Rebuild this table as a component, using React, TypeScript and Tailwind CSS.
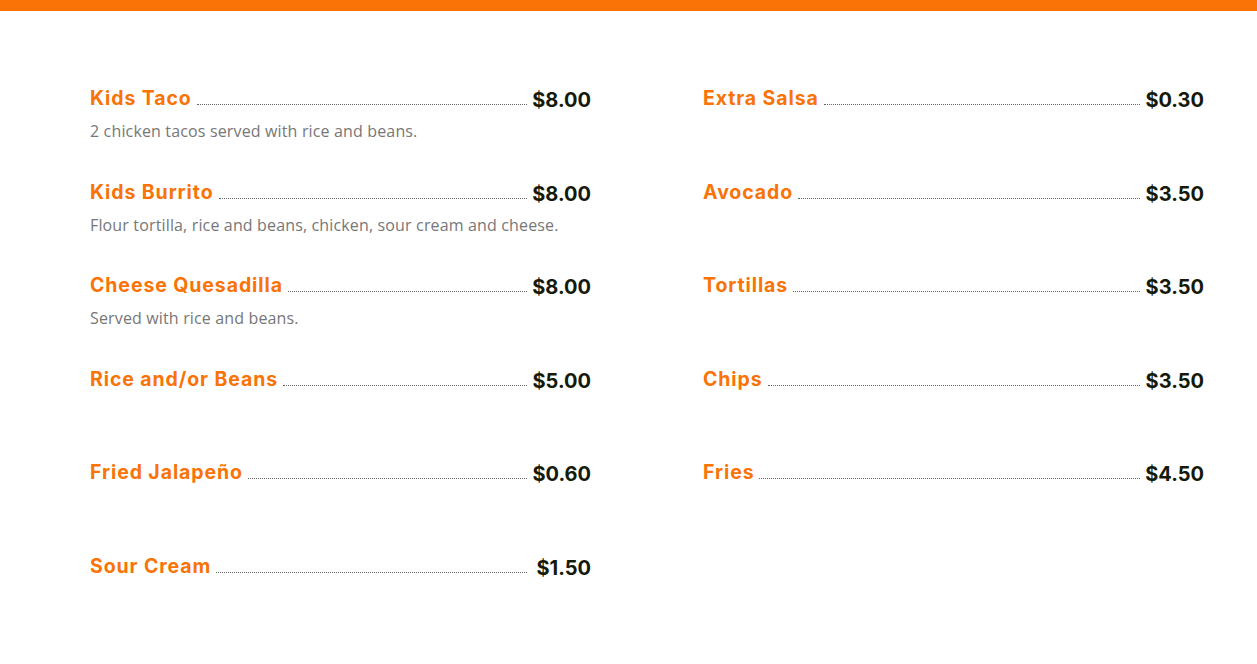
import React from "react";

type Item = { name: string; price: string; desc?: string };

const left: Item[] = [
  { name: "Kids Taco", price: "$8.00", desc: "2 chicken tacos served with rice and beans." },
  { name: "Kids Burrito", price: "$8.00", desc: "Flour tortilla, rice and beans, chicken, sour cream and cheese." },
  { name: "Cheese Quesadilla", price: "$8.00", desc: "Served with rice and beans." },
  { name: "Rice and/or Beans", price: "$5.00" },
  { name: "Fried Jalapeño", price: "$0.60" },
  { name: "Sour Cream", price: "$1.50" },
];

const right: Item[] = [
  { name: "Extra Salsa", price: "$0.30" },
  { name: "Avocado", price: "$3.50" },
  { name: "Tortillas", price: "$3.50" },
  { name: "Chips", price: "$3.50" },
  { name: "Fries", price: "$4.50" },
];

function Row({ item }: { item: Item }) {
  return (
    <div className="h-[93.6px]">
      <div className="flex items-end h-[24px]">
        <span className="text-[#f97306] text-[19.5px] font-bold leading-[24px] tracking-[0.9px] whitespace-nowrap font-['Inter',sans-serif]">
          {item.name}
        </span>
        <span className="flex-1 border-b border-dotted border-[#666] ml-[5px] mb-[5px]" />
        <span className="w-[64px] shrink-0 text-right text-[#151a08] text-[20px] font-bold leading-[24px] translate-y-[2px] font-['Inter',sans-serif]">
          {item.price}
        </span>
      </div>
      {item.desc && (
        <div className="mt-[10px] text-[16px] leading-[22px] tracking-[0.15px] text-[#777] font-['Open_Sans',sans-serif]">
          {item.desc}
        </div>
      )}
    </div>
  );
}

export default function App() {
  return (
    <div className="w-[1257px] h-[664px] bg-white">
      <div className="h-[11px] bg-[#f97306]" />
      <div className="flex gap-[112px] pl-[90px] pt-[75px]">
        <div className="w-[501px]">
          {left.map((i) => (
            <Row key={i.name} item={i} />
          ))}
        </div>
        <div className="w-[501px]">
          {right.map((i) => (
            <Row key={i.name} item={i} />
          ))}
        </div>
      </div>
    </div>
  );
}
